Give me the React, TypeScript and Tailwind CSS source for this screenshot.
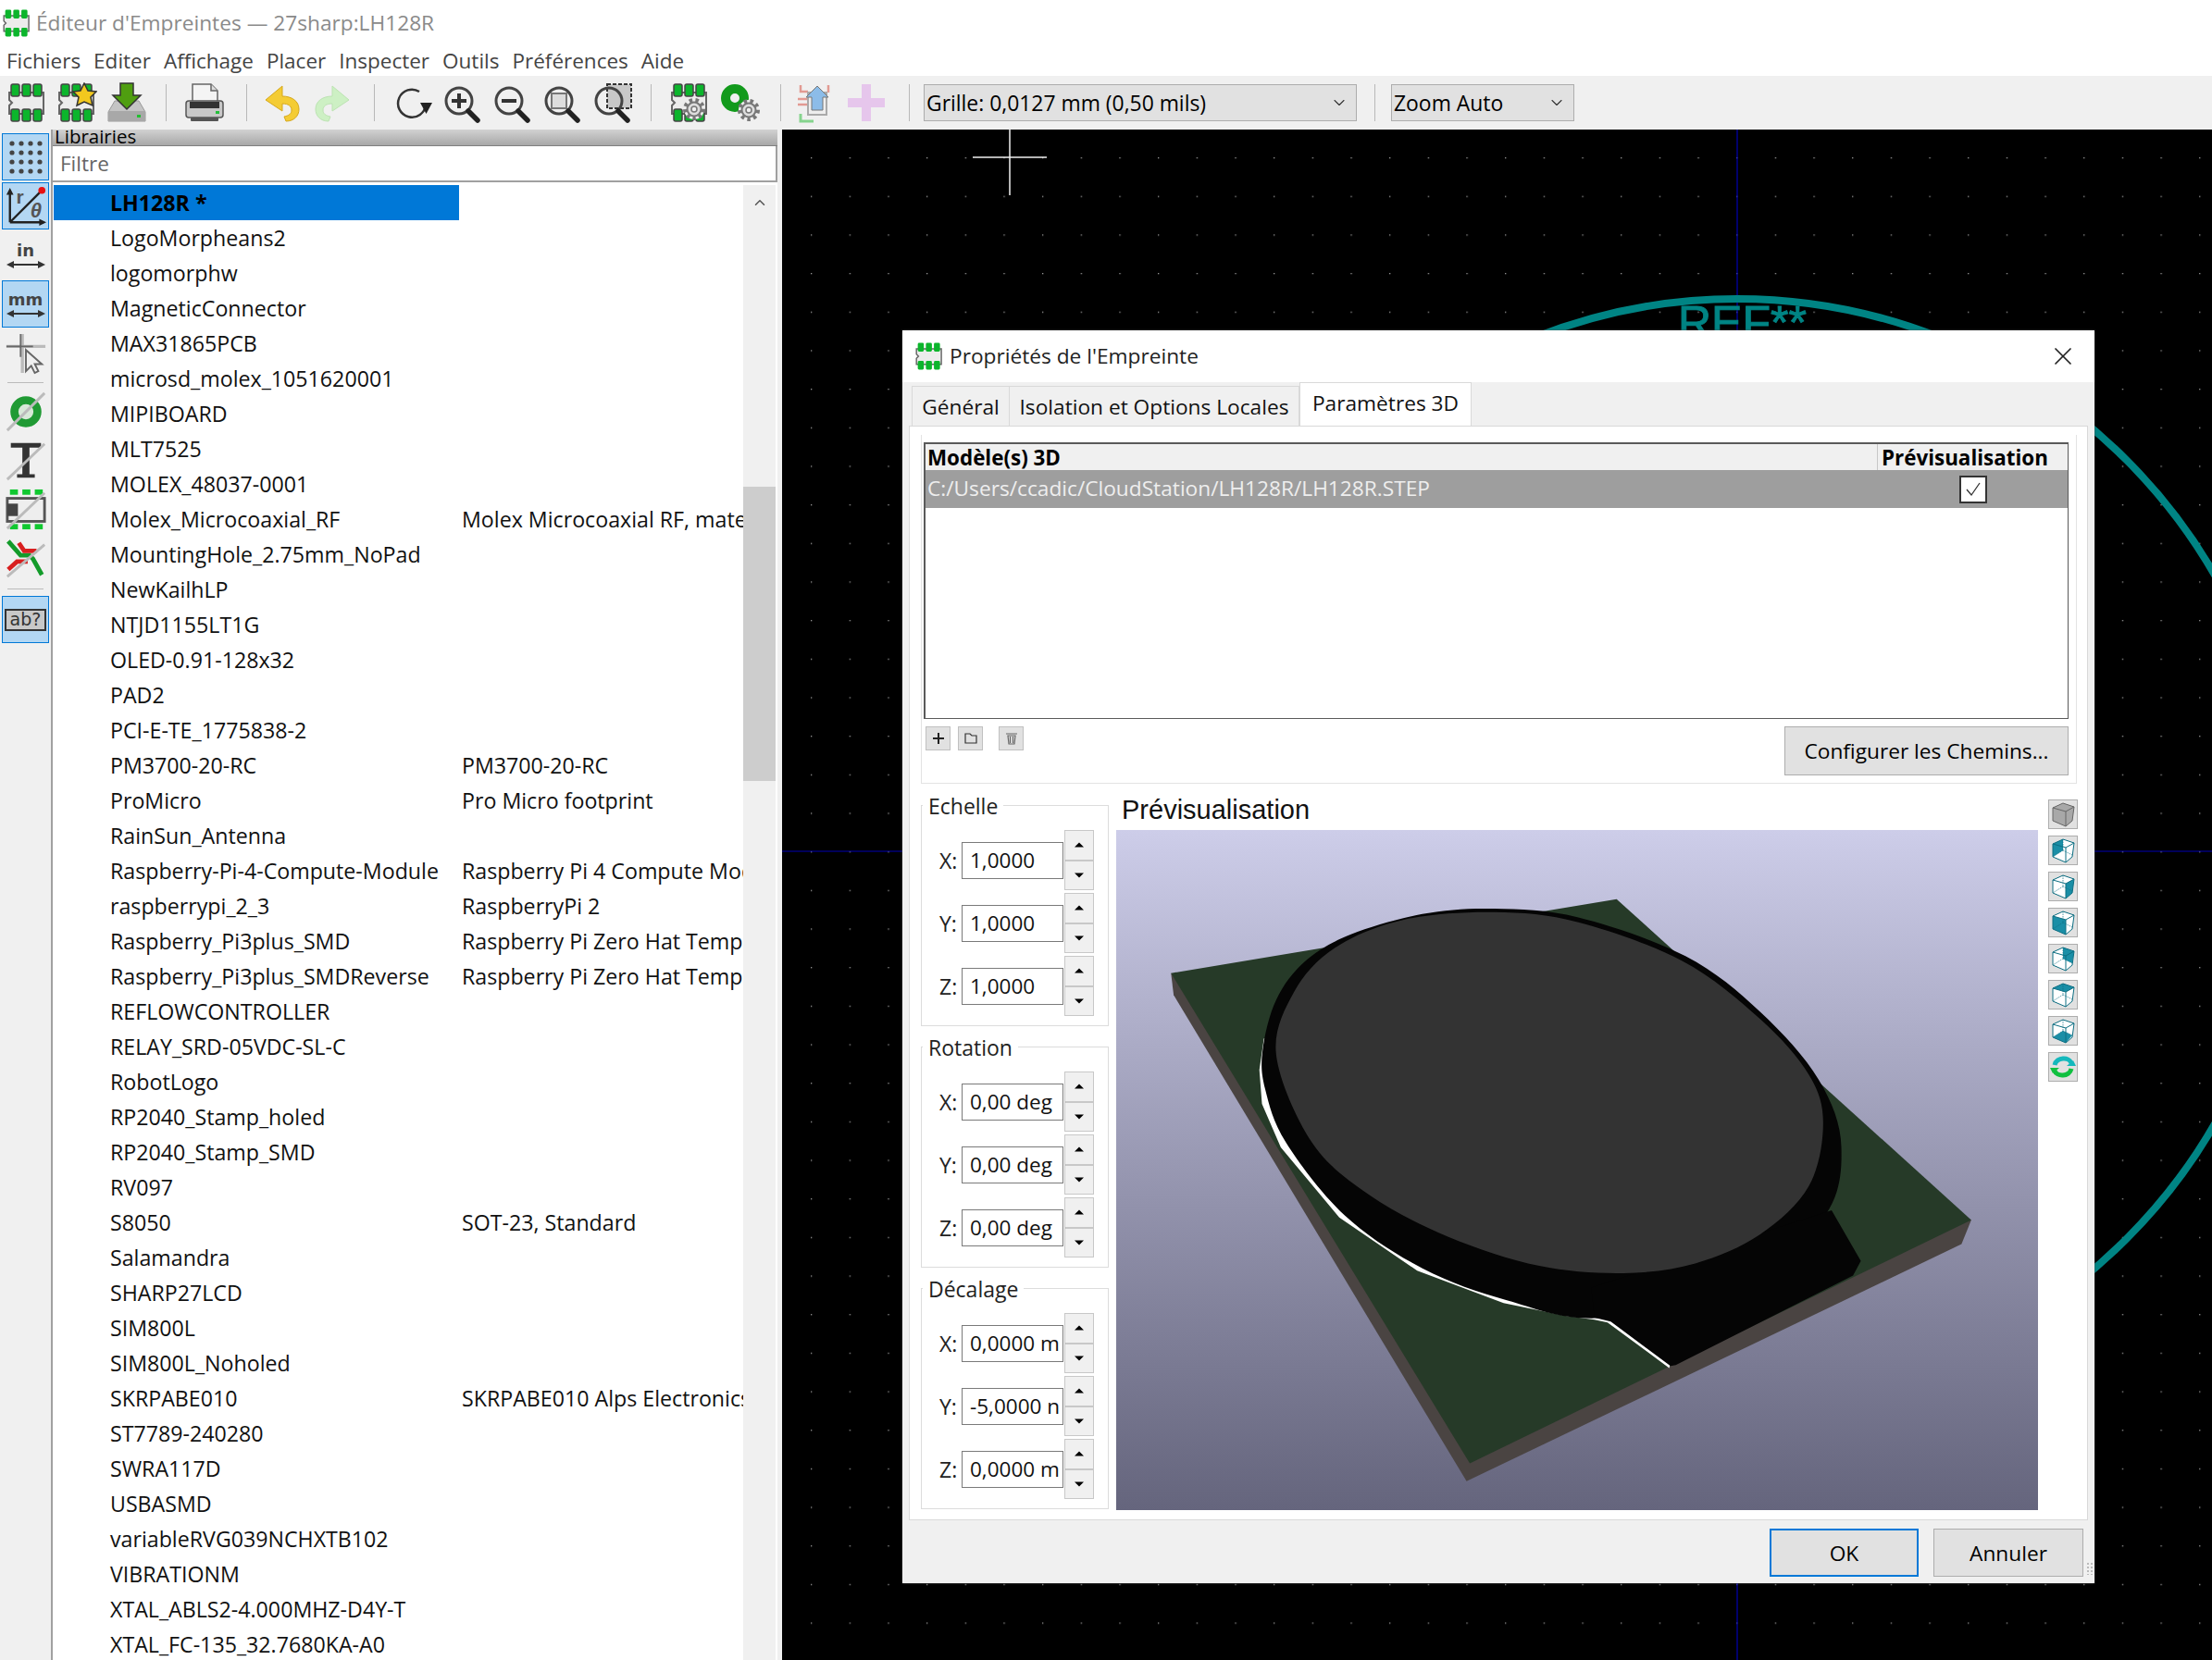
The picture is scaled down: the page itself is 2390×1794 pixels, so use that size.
import React from 'react'
import { X, ChevronDown, ChevronUp } from 'lucide-react'

const rows: [string, string][] = [
  ['LogoMorpheans2', ''],
  ['logomorphw', ''],
  ['MagneticConnector', ''],
  ['MAX31865PCB', ''],
  ['microsd_molex_1051620001', ''],
  ['MIPIBOARD', ''],
  ['MLT7525', ''],
  ['MOLEX_48037-0001', ''],
  ['Molex_Microcoaxial_RF', 'Molex Microcoaxial RF, mate'],
  ['MountingHole_2.75mm_NoPad', ''],
  ['NewKailhLP', ''],
  ['NTJD1155LT1G', ''],
  ['OLED-0.91-128x32', ''],
  ['PAD2', ''],
  ['PCI-E-TE_1775838-2', ''],
  ['PM3700-20-RC', 'PM3700-20-RC'],
  ['ProMicro', 'Pro Micro footprint'],
  ['RainSun_Antenna', ''],
  ['Raspberry-Pi-4-Compute-Module', 'Raspberry Pi 4 Compute Mod'],
  ['raspberrypi_2_3', 'RaspberryPi 2'],
  ['Raspberry_Pi3plus_SMD', 'Raspberry Pi Zero Hat Templ'],
  ['Raspberry_Pi3plus_SMDReverse', 'Raspberry Pi Zero Hat Templ'],
  ['REFLOWCONTROLLER', ''],
  ['RELAY_SRD-05VDC-SL-C', ''],
  ['RobotLogo', ''],
  ['RP2040_Stamp_holed', ''],
  ['RP2040_Stamp_SMD', ''],
  ['RV097', ''],
  ['S8050', 'SOT-23, Standard'],
  ['Salamandra', ''],
  ['SHARP27LCD', ''],
  ['SIM800L', ''],
  ['SIM800L_Noholed', ''],
  ['SKRPABE010', 'SKRPABE010 Alps Electronics'],
  ['ST7789-240280', ''],
  ['SWRA117D', ''],
  ['USBASMD', ''],
  ['variableRVG039NCHXTB102', ''],
  ['VIBRATIONM', ''],
  ['XTAL_ABLS2-4.000MHZ-D4Y-T', ''],
  ['XTAL_FC-135_32.7680KA-A0', ''],
]

const groups = [
  { title: 'Echelle', values: ['1,0000', '1,0000', '1,0000'] },
  { title: 'Rotation', values: ['0,00 deg', '0,00 deg', '0,00 deg'] },
  { title: 'Décalage', values: ['0,0000 m', '-5,0000 n', '0,0000 m'] },
]

// closed Catmull-Rom through the points, for the round shapes of the 3D model
function smooth(p: number[][]) {
  const n = p.length
  let d = `M${p[0][0]} ${p[0][1]}`
  for (let i = 0; i < n; i++) {
    const a = p[(i - 1 + n) % n]
    const b = p[i]
    const c = p[(i + 1) % n]
    const e = p[(i + 2) % n]
    d += `C${b[0] + (c[0] - a[0]) / 6} ${b[1] + (c[1] - a[1]) / 6} ${c[0] - (e[0] - b[0]) / 6} ${c[1] - (e[1] - b[1]) / 6} ${c[0]} ${c[1]}`
  }
  return d + 'Z'
}

const disc = [[255, 460], [282, 330], [345, 238], [450, 180], [590, 164], [720, 185], [880, 265], [1000, 385], [1075, 500], [1097, 600], [1075, 730], [1000, 830], [900, 890], [790, 910], [660, 895], [520, 835], [400, 750], [310, 640]]
const rim = [[234, 450], [255, 345], [300, 265], [370, 210], [480, 168], [590, 157], [720, 175], [885, 255], [1000, 370], [1090, 510], [1125, 650], [1095, 800], [950, 950], [750, 1003], [610, 966], [480, 900], [360, 790], [270, 640], [238, 530]]

function Footprint({ star, gear }: { star?: boolean; gear?: boolean }) {
  return (
    <svg viewBox="0 0 44 44" className="w-[44px] h-[44px]">
      <path d="M3 11h37v9l0 3v11h-37v-9l3-3-3-3z" fill="#ececec" stroke="#666" strokeWidth="2" />
      {[5, 17, 29].map(x => (
        <g key={x}>
          <rect x={x} y="2" width="9" height="13" rx="2" fill="#0cb52c" stroke="#444" strokeWidth="1.5" />
          <rect x={x} y="29" width="9" height="13" rx="2" fill="#0cb52c" stroke="#444" strokeWidth="1.5" />
        </g>
      ))}
      {star && <path d="M30 1l4 8 9 1-6 6 2 9-9-4-8 4 2-9-6-6 8-1z" fill="#f2c81e" stroke="#333" strokeWidth="1.5" />}
      {gear && <Gear x={27} y={29} />}
    </svg>
  )
}

function Gear({ x, y }: { x: number; y: number }) {
  return (
    <g transform={`translate(${x} ${y})`}>
      <circle r="11" fill="#eee" />
      <circle r="10" fill="none" stroke="#777" strokeWidth="4" strokeDasharray="3.5 3.4" />
      <circle r="7.5" fill="#ddd" stroke="#777" strokeWidth="2" />
      <circle r="3" fill="#f0f0f0" stroke="#777" strokeWidth="1.5" />
    </g>
  )
}

function Magnifier({ children }: { children?: React.ReactNode }) {
  return (
    <svg viewBox="0 0 44 44" className="w-[44px] h-[44px]">
      {children}
      <circle cx="18" cy="20" r="14" fill="none" stroke="#444" strokeWidth="3" />
      <path d="M28 31l10 10" stroke="#222" strokeWidth="5.5" strokeLinecap="round" />
    </svg>
  )
}

function ToolIcon({ children }: { children: React.ReactNode }) {
  return <div className="w-[54px] h-[44px] flex items-center justify-center shrink-0">{children}</div>
}

function Sep({ className }: { className: string }) {
  return <div className={`w-[1px] h-[40px] bg-[#b8b8b8] shrink-0 ${className}`} />
}

function TopToolbar() {
  return (
    <div className="h-[58px] bg-[#f0f0f0] flex items-center pl-[2px] shrink-0">
      <ToolIcon><Footprint /></ToolIcon>
      <ToolIcon><Footprint star /></ToolIcon>
      <ToolIcon>
        <svg viewBox="0 0 44 44" className="w-[44px] h-[44px]">
          <path d="M9 20h26l7 12v10H2V32z" fill="#c4c4c4" stroke="#999" />
          <rect x="2" y="31" width="40" height="11" fill="#a8a8a8" />
          <rect x="33" y="35" width="4" height="3" fill="#22c030" />
          <path d="M15 1h14v13h8L22 29 7 14h8z" fill="#4f9e10" stroke="#333" strokeWidth="1.5" />
        </svg>
      </ToolIcon>
      <Sep className="ml-[15px] mr-[14px]" />
      <ToolIcon>
        <svg viewBox="0 0 44 44" className="w-[44px] h-[44px]">
          <path d="M9 2h20l7 7v14H9z" fill="#f4f4f4" stroke="#666" strokeWidth="1.5" />
          <path d="M29 2v7h7" fill="#ddd" stroke="#666" strokeWidth="1.5" />
          <rect x="2" y="20" width="40" height="18" rx="3" fill="#c8c8c8" stroke="#555" strokeWidth="1.5" />
          <rect x="6" y="21" width="32" height="7" fill="#333" />
          <rect x="34" y="31" width="4" height="3" fill="#24c03a" />
          <rect x="7" y="38" width="30" height="4" rx="1" fill="#555" />
        </svg>
      </ToolIcon>
      <Sep className="ml-[18px] mr-[11px]" />
      <ToolIcon>
        <svg viewBox="0 0 44 44" className="w-[44px] h-[44px]">
          <path d="M22 4L4 19l18 12v-8c7 0 10 3 10 7s-3 6-8 7l2 5c9 0 14-6 14-13 0-9-8-14-18-14z" fill="#f4cc34" stroke="#d6a81c" />
        </svg>
      </ToolIcon>
      <ToolIcon>
        <svg viewBox="0 0 44 44" className="w-[44px] h-[44px]">
          <path d="M22 4l18 15-18 12v-8c-7 0-10 3-10 7s3 6 8 7l-2 5c-9 0-14-6-14-13 0-9 8-14 18-14z" fill="#cdf0c4" stroke="#bce3b2" />
        </svg>
      </ToolIcon>
      <Sep className="ml-[18px] mr-[14px]" />
      <ToolIcon>
        <svg viewBox="0 0 44 44" className="w-[44px] h-[44px]">
          <path d="M36 24a15 15 0 1 1-7-14" fill="none" stroke="#333" strokeWidth="2.5" />
          <path d="M30 22h13l-6.500 12z" fill="#222" />
        </svg>
      </ToolIcon>
      <ToolIcon><Magnifier><path d="M10 20h16M18 12v16" stroke="#333" strokeWidth="4" /></Magnifier></ToolIcon>
      <ToolIcon><Magnifier><path d="M10 20h16" stroke="#333" strokeWidth="4" /></Magnifier></ToolIcon>
      <ToolIcon><Magnifier><rect x="10" y="12" width="16" height="16" fill="#ddd" stroke="#777" strokeWidth="2" /></Magnifier></ToolIcon>
      <ToolIcon>
        <Magnifier><rect x="16" y="2" width="26" height="26" fill="#c8c8c8" stroke="#333" strokeWidth="2" strokeDasharray="4 2" /></Magnifier>
      </ToolIcon>
      <Sep className="ml-[14px] mr-[14px]" />
      <ToolIcon><Footprint gear /></ToolIcon>
      <div className="ml-[2px]">
        <ToolIcon>
          <svg viewBox="0 0 44 44" className="w-[44px] h-[44px]">
            <circle cx="15" cy="17" r="10" fill="none" stroke="#129a1c" strokeWidth="10" />
            <Gear x={30} y={30} />
          </svg>
        </ToolIcon>
      </div>
      <Sep className="ml-[15px] mr-[10px]" />
      <ToolIcon>
        <svg viewBox="0 0 44 44" className="w-[44px] h-[44px]">
          <path d="M6 3v7h8M3 18h12M3 24h12M36 3v8" fill="none" stroke="#e29a92" strokeWidth="2.5" />
          <path d="M6 34v8h14" fill="none" stroke="#86d48e" strokeWidth="3" />
          <rect x="14" y="11" width="20" height="24" fill="#eee" stroke="#aaa" strokeWidth="2" />
          <path d="M24 4l12 12h-6v14H18V16h-6z" fill="#8cbce8" stroke="#777" />
        </svg>
      </ToolIcon>
      <div className="ml-[1px]">
        <ToolIcon>
          <svg viewBox="0 0 44 44" className="w-[44px] h-[44px]">
            <path d="M17 2h10v15h15v10H27v15H17V27H2V17h15z" fill="#e6c6ec" />
          </svg>
        </ToolIcon>
      </div>
      <Sep className="ml-[19px] mr-[15px]" />
      <Select className="w-[468px]" label="Grille: 0,0127 mm (0,50 mils)" />
      <Sep className="ml-[19px] mr-[17px]" />
      <Select className="w-[198px]" label="Zoom Auto" />
    </div>
  )
}

function Select({ className, label }: { className: string; label: string }) {
  return (
    <div className={`h-[40px] bg-[#e1e1e1] border border-[#adadad] flex items-center justify-between pl-[2px] pr-[8px] text-[22.900px] text-black ${className}`}>
      <span className="pt-[2px]">{label}</span>
      <ChevronDown size={20} strokeWidth={1.3} className="text-[#333]" />
    </div>
  )
}

function SideButton({ active, children }: { active?: boolean; children: React.ReactNode }) {
  return (
    <div className={`w-[51px] h-[51px] mb-[2px] flex items-center justify-center border ${active ? 'bg-[#b3d7f3] border-[#0078d7]' : 'border-transparent'}`}>
      {children}
    </div>
  )
}

function LeftToolbar() {
  const dots = [0, 1, 2, 3]
  return (
    <div className="w-[55px] shrink-0 bg-[#f0f0f0] pt-[4px] pl-[2px] text-[#333]">
      <SideButton active>
        <svg viewBox="0 0 44 44" className="w-[44px] h-[44px]">
          {dots.map(a => dots.map(b => <circle key={`${a}${b}`} cx={7 + a * 10} cy={7 + b * 10} r="2.6" fill="#444" />))}
        </svg>
      </SideButton>
      <SideButton active>
        <svg viewBox="0 0 48 48" className="w-[46px] h-[46px] font-['Liberation_Sans',sans-serif]">
          <path d="M6 42V8M6 42h38M6 42L40 8" fill="none" stroke="#222" strokeWidth="2.5" />
          <path d="M6 3l-4 8h8zM47 42l-8-4v8z" fill="#222" />
          <circle cx="42" cy="6" r="4" fill="#e81010" />
          <text x="13" y="21" fontSize="22" fontWeight="700" fill="#555">r</text>
          <text x="29" y="36" fontSize="23" fontWeight="700" fontStyle="italic" fill="#555">θ</text>
        </svg>
      </SideButton>
      <SideButton>
        <div className="flex flex-col items-center leading-none">
          <span className="font-['DejaVu_Sans',sans-serif] font-bold text-[18px] leading-[20px] text-[#444]">in</span>
          <DoubleArrow />
        </div>
      </SideButton>
      <SideButton active>
        <div className="flex flex-col items-center leading-none">
          <span className="font-['DejaVu_Sans',sans-serif] font-bold text-[18px] leading-[20px] text-[#444]">mm</span>
          <DoubleArrow />
        </div>
      </SideButton>
      <SideButton>
        <svg viewBox="0 0 48 48" className="w-[46px] h-[46px]">
          <path d="M20 2v44M2 16h44" stroke="#bbb" strokeWidth="3.5" />
          <path d="M18 2v26M2 16h30" stroke="#444" strokeWidth="2" opacity=".7" />
          <path d="M24 20v24l6-6 4 8 4-2-4-8h8z" fill="#f0f0f0" stroke="#666" strokeWidth="2" />
        </svg>
      </SideButton>
      <div className="h-[8px] flex items-center pl-[6px] pr-[8px] mb-[2px]"><div className="h-[1px] w-full bg-[#bbb]" /></div>
      <SideButton>
        <svg viewBox="0 0 48 48" className="w-[46px] h-[46px]">
          <circle cx="24" cy="24" r="13" fill="#d8e8d8" stroke="#209a34" strokeWidth="9" />
          <path d="M3 45L45 3" stroke="#bbb" strokeWidth="3" />
        </svg>
      </SideButton>
      <SideButton>
        <svg viewBox="0 0 48 48" className="w-[46px] h-[46px]">
          <path d="M7 4h34v5H28v30h6v4H14v-4h6V9H7z" fill="#333" />
          <path d="M3 45L45 5" stroke="#bbb" strokeWidth="3" />
        </svg>
      </SideButton>
      <SideButton>
        <svg viewBox="0 0 48 48" className="w-[46px] h-[46px]">
          <rect x="3" y="11" width="42" height="26" fill="#eee" stroke="#555" strokeWidth="3" />
          <path d="M3 17h12v14H3z" fill="#444" />
          {[6, 20, 34].map(x => (
            <g key={x}>
              <rect x={x} y="1" width="9" height="6" fill="#10c830" />
              <rect x={x} y="40" width="9" height="6" fill="#10c830" />
            </g>
          ))}
          <path d="M3 45L45 5" stroke="#bbb" strokeWidth="3" />
        </svg>
      </SideButton>
      <SideButton>
        <svg viewBox="0 0 48 48" className="w-[46px] h-[46px]" fill="none">
          <path d="M4 4l14 16h10l4 4 10 18" stroke="#139b2a" strokeWidth="5" />
          <path d="M16 6l6 9h14" stroke="#d81f1f" strokeWidth="5" />
          <path d="M4 36l10-9h12" stroke="#d81f1f" strokeWidth="5" />
          <path d="M3 44L45 8" stroke="#bbb" strokeWidth="3" />
        </svg>
      </SideButton>
      <div className="h-[11px] flex items-center pl-[6px] pr-[8px] mb-[2px]"><div className="h-[1px] w-full bg-[#bbb]" /></div>
      <SideButton active>
        <div className="w-[45px] h-[24px] bg-[#c8c8c8] border-[2px] border-[#333] flex items-center justify-center font-['DejaVu_Sans',sans-serif] text-[19px] leading-none text-[#333]">ab?</div>
      </SideButton>
    </div>
  )
}

function DoubleArrow() {
  return (
    <svg viewBox="0 0 44 10" className="w-[44px] h-[10px]">
      <path d="M1 5l8-4v3h26V1l8 4-8 4V6H9v3z" fill="#333" />
    </svg>
  )
}

function LibraryPanel() {
  return (
    <div className="w-[785px] shrink-0 border-l-[2px] border-[#a0a0a0] flex flex-col bg-white overflow-hidden">
      <div className="h-[18px] bg-linear-to-b from-[#d2d2d2] to-[#a8a8a8] text-[20.500px] leading-[14px] pl-[2px] text-black border-b border-[#808080] shrink-0">
        Librairies
      </div>
      <div className="h-[39px] shrink-0 border-b-[2px] border-r-[2px] border-[#a0a0a0] flex items-center pl-[8px] text-[22.500px] text-[#666]">Filtre</div>
      <div className="flex flex-1 pt-[3px] min-h-0 bg-white">
        <div className="w-[746px] shrink-0 pl-[1px] text-[23.200px] text-[#111]">
          <div className="h-[38px] flex items-center">
            <div className="w-[438px] h-full bg-[#0078d7] pl-[61px] font-bold text-black flex items-center">LH128R *</div>
          </div>
          {rows.map(([name, desc]) => (
            <div key={name} className="h-[38px] flex items-center">
              <div className="w-[438px] pl-[61px] whitespace-nowrap">{name}</div>
              <div className="pl-[3px] w-[307px] overflow-hidden whitespace-nowrap">{desc}</div>
            </div>
          ))}
        </div>
        <div className="w-[35px] shrink-0 bg-[#f0f0f0] flex flex-col items-center pt-[10px]">
          <ChevronUp size={18} strokeWidth={2} className="text-[#555]" />
          <div className="w-full h-[318px] mt-[298px] bg-[#cdcdcd]" />
        </div>
      </div>
    </div>
  )
}

function Canvas() {
  return (
    <div className="flex-1 ml-[5px] bg-black">
      <svg width="1545" height="1654" className="block">
        <defs>
          <pattern id="grid" x="31" y="30" width="41.67" height="41.67" patternUnits="userSpaceOnUse">
            <rect width="1.3" height="1.3" fill="#999" />
          </pattern>
        </defs>
        <rect width="1545" height="1654" fill="url(#grid)" />
        <path d="M0 780H1545M1032 0V1654" stroke="#0000b4" strokeWidth="1.2" />
        <circle cx="1032" cy="778" r="595" fill="none" stroke="#008484" strokeWidth="8" />
        <text x="968" y="226" fontSize="50" fontFamily="Liberation Sans, sans-serif" fill="#008484" stroke="#008484" strokeWidth="1">REF**</text>
        <path d="M206 30H286M246 0V71" stroke="#f0f0f0" strokeWidth="1.5" />
      </svg>
    </div>
  )
}

function Spin() {
  return (
    <div className="w-[32px] h-[65px] ml-[1px] flex flex-col shrink-0">
      {['M-5 3L0-2 5 3Z', 'M-5-2L0 3 5-2Z'].map(d => (
        <div key={d} className="h-1/2 bg-[#f0f0f0] border border-[#c8c8c8] flex items-center justify-center">
          <svg width="12" height="8" viewBox="-6 -3 12 7"><path d={d} fill="#000" /></svg>
        </div>
      ))}
    </div>
  )
}

function Group({ title, values }: { title: string; values: string[] }) {
  return (
    <div className="relative w-[203px] h-[239px] border border-[#dcdcdc] pt-[26px] pl-[19px] flex flex-col gap-[3px]">
      <span className="absolute left-[1px] top-[-15px] px-[6px] bg-white text-[23px] leading-[30px] text-[#222]">{title}</span>
      {['X:', 'Y:', 'Z:'].map((axis, i) => (
        <div key={axis} className="flex items-center h-[65px]">
          <span className="w-[24px] text-[23px] text-[#222] pt-[1px]">{axis}</span>
          <div className="w-[110px] h-[40px] border border-[#7a7a7a] flex items-center pl-[8px] pt-[1px] text-[22.500px] text-[#111] overflow-hidden whitespace-nowrap">{values[i]}</div>
          <Spin />
        </div>
      ))}
    </div>
  )
}

const faces: string[] = [
  '4,8 15,3 15,15 4,22',
  '18,12 27,7 25,22 18,28',
  '4,8 18,12 18,28 4,22',
  '15,3 27,7 25,20 15,15',
  '4,8 15,3 27,7 18,12',
  '4,22 15,15 25,20 18,28',
]

function CubeButton({ face }: { face: number | null }) {
  const line = face === null ? '#666' : '#0d6e82'
  return (
    <div className="w-[32px] h-[32px] bg-[#e1e1e1] border border-[#adadad] flex items-center justify-center">
      <svg viewBox="0 0 30 30" className="w-[30px] h-[30px]">
        <path d="M4 8L15 3l12 4-2 15-7 6-14-6z" fill={face === null ? '#a8a8a8' : '#fff'} />
        {face !== null && <polygon points={faces[face]} fill="#1a8ea6" />}
        {face !== null && <path d="M15 3v12M15 15L4 22M15 15l10 5" fill="none" stroke={line} strokeWidth="0.7" strokeDasharray="1.500 1" />}
        <path d="M4 8L15 3l12 4-2 15-7 6-14-6zM4 8l14 4 9-5M18 12v16" fill="none" stroke={line} strokeWidth="1" />
      </svg>
    </div>
  )
}

function Preview3D() {
  return (
    <div className="w-[996px] h-[735px] bg-linear-to-b from-[#cdcde9] to-[#65657d]">
      <svg viewBox="0 0 996 735" className="block w-full h-full">
        <g transform="translate(-6 3) scale(0.7018 0.523)">
          <path d="M93 290L97 335L548 1340L1310 850L1325 800Z" fill="#4a4442" />
          <path d="M93 290L779 137L1325 800L553 1303Z" fill="#263a28" />
          <path d="M236 425L229 490L233 560L262 650L352 795L472 905L605 972L700 998L745 1006L765 1012L860 1106L900 900L500 500Z" fill="#fff" />
          <path d={smooth(rim)} fill="#050505" />
          <path d="M740 940L1110 780L1155 885L1143 915L870 1100L862 1102L770 1010L745 1002Z" fill="#050505" />
          <path d={smooth(disc)} fill="#333333" />
        </g>
      </svg>
    </div>
  )
}

function Dialog() {
  return (
    <div className="absolute left-[975px] top-[357px] w-[1288px] h-[1354px] bg-[#f0f0f0] text-[22.700px] text-[#111] flex flex-col shadow-[0_0_2px_#555]">
      <div className="h-[56px] bg-white flex items-center pl-[13px] pr-[18px] shrink-0">
        <Mini />
        <span className="ml-[6px] pt-[1px] text-[#222]">Propriétés de l'Empreinte</span>
        <X size={32} strokeWidth={1.3} className="ml-auto text-[#222]" />
      </div>
      <div className="h-[47px] flex items-end pl-[10px] shrink-0">
        <div className="w-[106px] h-[43px] pt-[2px] border border-b-0 border-[#d9d9d9] flex items-center justify-center">Général</div>
        <div className="w-[313px] h-[43px] pt-[2px] border border-b-0 border-l-0 border-[#d9d9d9] flex items-center justify-center whitespace-nowrap">Isolation et Options Locales</div>
        <div className="w-[186px] h-[47px] bg-white border border-b-0 border-[#d9d9d9] flex items-center justify-center pb-[2px]">Paramètres 3D</div>
      </div>
      <div className="ml-[7px] w-[1274px] h-[1183px] bg-white border border-[#d9d9d9] pl-[12px] shrink-0">
        <div className="mt-[9px] w-[1249px] h-[377px] border border-t-0 border-[#e3e3e3] pl-[2px] pr-[8px] pt-[8px]">
          <div className="h-[299px] border-[2px] border-[#5a5a5a] flex flex-col border-b-[1px] border-r-[1px]">
            <div className="h-[28px] bg-[#f0f0f0] flex font-bold text-[22.400px] leading-[30px] text-black shrink-0">
              <div className="flex-1 pl-[2px]">Modèle(s) 3D</div>
              <div className="w-[206px] pl-[4px] border-l border-[#c8c8c8] whitespace-nowrap">Prévisualisation</div>
            </div>
            <div className="h-[41px] bg-[#9e9e9e] flex items-center text-[#eee] shrink-0">
              <div className="flex-1 pl-[2px]">C:/Users/ccadic/CloudStation/LH128R/LH128R.STEP</div>
              <div className="w-[206px] pl-[89px]">
                <div className="w-[30px] h-[30px] bg-white border-[2px] border-[#333] flex items-center justify-center">
                  <svg viewBox="0 0 26 26" className="w-[26px] h-[26px]"><path d="M6 13l5 6L20 6" fill="none" stroke="#333" strokeWidth="1.3" /></svg>
                </div>
              </div>
            </div>
          </div>
          <div className="flex justify-between mt-[8px] items-start">
            <div className="flex pl-[2px]">
              <IconBtn><svg viewBox="0 0 16 16" className="w-[16px] h-[16px]"><path d="M8 2v12M2 8h12" stroke="#222" strokeWidth="2" /></svg></IconBtn>
              <div className="ml-[8px]"><IconBtn><svg viewBox="0 0 16 16" className="w-[16px] h-[16px]"><path d="M2 3h5l2 2h5v8H2z" fill="none" stroke="#333" strokeWidth="1.2" /></svg></IconBtn></div>
              <div className="ml-[17px]"><IconBtn><svg viewBox="0 0 16 16" className="w-[16px] h-[16px]"><path d="M2 3h12M4 5h8l-1 9H5zM6.5 6v7M9.5 6v7" fill="none" stroke="#666" strokeWidth="1.2" /></svg></IconBtn></div>
            </div>
            <div className="w-[307px] h-[53px] pt-[2px] bg-[#e1e1e1] border border-[#adadad] flex items-center justify-center text-black">Configurer les Chemins...</div>
          </div>
        </div>
        <div className="flex mt-[17px]">
          <div className="flex flex-col gap-[22px] pt-[6px] shrink-0">
            {groups.map(g => <Group key={g.title} title={g.title} values={g.values} />)}
          </div>
          <div className="ml-[8px] shrink-0">
            <div className="h-[33px] pl-[6px] font-['Liberation_Sans',sans-serif] text-[29px] flex items-end pb-[7px] leading-[30px] text-[#111]">Prévisualisation</div>
            <Preview3D />
          </div>
          <div className="ml-[11px] flex flex-col gap-[7px]">
            <CubeButton face={null} />
            {[0, 1, 2, 3, 4, 5].map(f => <CubeButton key={f} face={f} />)}
            <div className="w-[32px] h-[32px] bg-[#e1e1e1] border border-[#adadad] flex items-center justify-center">
              <svg viewBox="0 0 28 28" className="w-[28px] h-[28px]" fill="none">
                <path d="M5 12C7 3 21 3 23 10" stroke="#14b8bc" strokeWidth="5" />
                <path d="M18 13h10l-3-6z" fill="#14b8bc" />
                <path d="M23 16C21 25 7 25 5 18" stroke="#10c040" strokeWidth="5" />
                <path d="M10 15H0l3 6z" fill="#10c040" />
              </svg>
            </div>
          </div>
        </div>
      </div>
      <div className="relative flex justify-end gap-[16px] pr-[12px] pt-[9px]">
        <div className="w-[161px] h-[52px] pt-[2px] bg-[#e1e1e1] border-[2px] border-[#0078d7] flex items-center justify-center text-black">OK</div>
        <div className="w-[162px] h-[52px] pt-[2px] bg-[#e1e1e1] border border-[#adadad] flex items-center justify-center text-black">Annuler</div>
        <div className="absolute right-[1px] bottom-[2px] w-[8px] h-[14px] bg-[radial-gradient(#bbb_1px,transparent_1px)] bg-[length:4px_4px]" />
      </div>
    </div>
  )
}

function IconBtn({ children }: { children: React.ReactNode }) {
  return <div className="w-[27px] h-[26px] bg-[#e1e1e1] border border-[#c0c0c0] flex items-center justify-center">{children}</div>
}

function Mini() {
  return (
    <svg viewBox="0 0 44 44" className="w-[32px] h-[32px] shrink-0">
      <path d="M3 11h37v9l0 3v11h-37v-9l3-3-3-3z" fill="#ececec" stroke="#666" strokeWidth="2" />
      {[5, 17, 29].map(x => (
        <g key={x}>
          <rect x={x} y="2" width="9" height="13" rx="2" fill="#0cb52c" />
          <rect x={x} y="29" width="9" height="13" rx="2" fill="#0cb52c" />
        </g>
      ))}
    </svg>
  )
}

export default function App() {
  return (
    <div className="relative w-[2390px] h-[1794px] overflow-hidden bg-[#f0f0f0] font-['Open_Sans',sans-serif] flex flex-col">
      <div className="h-[50px] bg-white flex items-center pl-[2px] text-[22.700px] text-[#8a8a8a] shrink-0">
        <Mini />
        <span className="ml-[5px]">Éditeur d'Empreintes — 27sharp:LH128R</span>
      </div>
      <div className="h-[32px] bg-white flex items-center gap-[14px] pl-[7px] text-[22.500px] text-[#444] shrink-0">
        {['Fichiers', 'Editer', 'Affichage', 'Placer', 'Inspecter', 'Outils', 'Préférences', 'Aide'].map(m => <span key={m}>{m}</span>)}
      </div>
      <TopToolbar />
      <div className="flex flex-1 min-h-0">
        <LeftToolbar />
        <LibraryPanel />
        <Canvas />
      </div>
      <Dialog />
    </div>
  )
}
